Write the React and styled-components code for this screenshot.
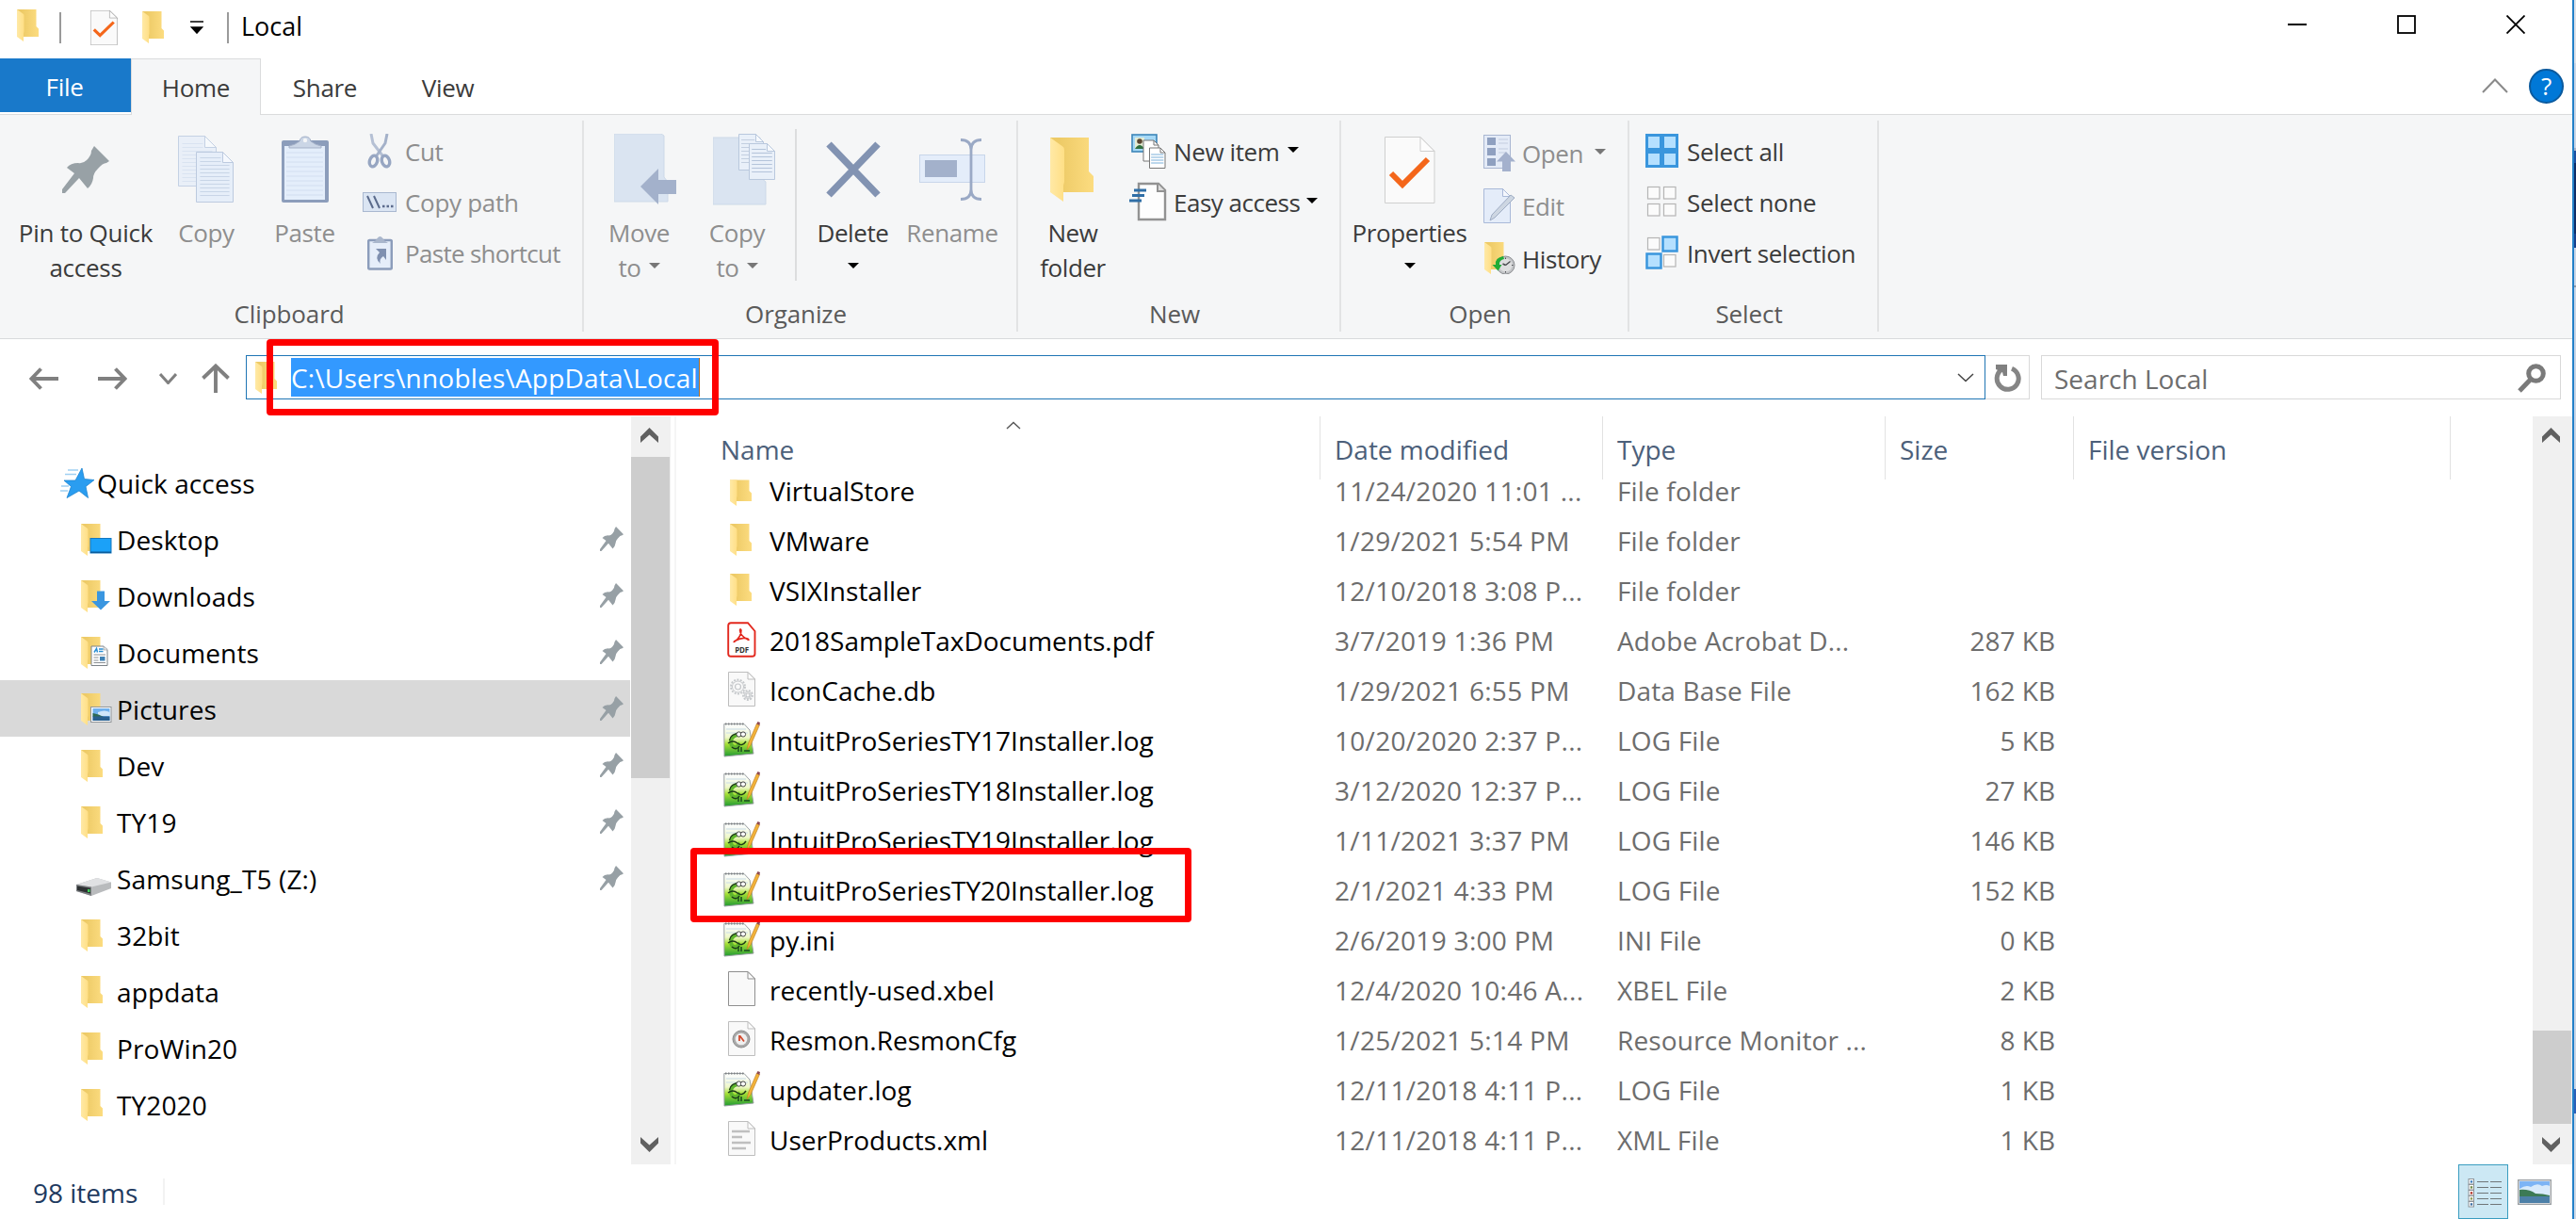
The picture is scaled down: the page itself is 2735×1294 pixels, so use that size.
import React from "react";
import styled, { createGlobalStyle, css } from "styled-components";

const GlobalStyle = createGlobalStyle`
  * { box-sizing: border-box; }
  body { margin: 0; background: #fff; overflow: hidden; }
  body, button, input { font-family: "Open Sans", "Noto Sans", sans-serif; }
`;

/* ---------- window frame ---------- */

const Desktop = styled.div`
  display: flex;
  width: 2735px;
  height: 1294px;
  overflow: hidden;
  background: #fff;
  font-size: 28px;
  color: #000;
  white-space: nowrap;
`;
const Window = styled.div`
  position: relative;
  display: flex;
  flex-direction: column;
  width: 2731px;
  height: 1294px;
  flex: none;
`;
const WindowEdge = styled.div`
  width: 2px;
  flex: none;
  background: #2380c8;
`;
const Backdrop = styled.div`
  width: 2px;
  flex: none;
  background: linear-gradient(
    #dde2ea 0 67px, #cbd7e8 67px 157px, #a9b4c8 157px 160px,
    #1d4fa0 160px 173px, #0d2c66 173px 248px, #173f8b 248px 263px,
    #cbd7e8 263px 303px, #8e99a8 303px 305px, #c9d6e8 305px 1156px,
    #2b5fb8 1156px 1182px, #cfdae8 1182px
  );
`;

/* ---------- title bar ---------- */

const TitleBar = styled.header`
  display: flex;
  height: 62px;
  align-items: flex-start;
`;
const QuickTools = styled.div`
  display: flex;
  align-items: center;
  height: 58px;
  padding-left: 18px;
`;
const TitleRule = styled.i`
  width: 2px;
  height: 33px;
  background: #9a9a9a;
  margin: 0 ${(p) => p.$after}px 0 ${(p) => p.$before}px;
`;
const FolderSlot = styled.span`
  display: flex;
  margin: 0 ${(p) => p.$after || 0}px ${(p) => p.$lift || 0}px 0;
`;
const WindowTitle = styled.h1`
  margin: 0;
  font-size: 27px;
  font-weight: 400;
  line-height: 56px;
  height: 58px;
`;
const WindowButtons = styled.div`
  display: flex;
  margin-left: auto;
  padding: 16px 50px 0 0;
  gap: 96px;
`;

/* ---------- ribbon ---------- */

const TabStrip = styled.nav`
  display: flex;
  height: 60px;
  border-bottom: 1px solid #dadbdc;
`;
const Tab = styled.button`
  width: ${(p) => p.$width}px;
  height: 60px;
  padding: 1px 0 0;
  border: 0;
  background: transparent;
  color: #3b3b3b;
  font-size: 26px;
  letter-spacing: -0.3px;
  ${(p) => p.$kind === "file" && css`
    height: 57px;
    padding: 2px 2px 0 0;
    background: #1979ca;
    color: #fff;
  `}
  ${(p) => p.$kind === "active" && css`
    border: 1px solid #dadbdc;
    border-bottom: 0;
    background: #f5f6f7;
  `}
`;
const TabStripEnd = styled.div`
  display: flex;
  align-items: center;
  gap: 22px;
  height: 60px;
  margin-left: auto;
  padding: 0 9px 2px 0;
`;
const HelpButton = styled.button`
  width: 37px;
  height: 37px;
  padding: 0;
  border: 2px solid #0a5a9e;
  border-radius: 50%;
  background: #0078d7;
  color: #fff;
  font-size: 26px;
  font-weight: 400;
  line-height: 32px;
`;
const Ribbon = styled.section`
  display: flex;
  height: 238px;
  padding: 6px 0 7px;
  border-bottom: 1px solid #d8dadc;
  background: #f5f6f7;
`;
const Group = styled.section`
  display: flex;
  flex-direction: column;
  width: ${(p) => p.$width}px;
  border-right: 2px solid #e2e3e4;
`;
const GroupBody = styled.div`
  display: flex;
  flex: 1;
  padding-left: ${(p) => p.$indent}px;
`;
const GroupLabel = styled.div`
  height: 38px;
  padding-right: ${(p) => p.$trim ?? 9}px;
  line-height: 38px;
  font-size: 26px;
  letter-spacing: -0.1px;
  text-align: center;
  color: #5a5a5a;
`;
const LargeButton = styled.button`
  display: flex;
  flex-direction: column;
  align-items: center;
  width: ${(p) => p.$width}px;
  flex: none;
  padding: 12px 0 0;
  border: 0;
  background: transparent;
  font-size: 26px;
  letter-spacing: ${(p) => p.$tracking ?? -0.4}px;
  line-height: 36.5px;
  color: ${(p) => (p.$disabled ? "#8e8e8e" : "#3b3b3b")};
`;
const LargeIcon = styled.span`
  display: flex;
  align-items: center;
  justify-content: center;
  height: 80px;
  margin-bottom: 9px;
  padding-left: ${(p) => p.$shift || 0}px;
`;
const LargeLine = styled.span`
  display: flex;
  align-items: center;
  gap: 8px;
  height: 36.5px;
`;
const InnerRule = styled.i`
  width: 2px;
  height: 161px;
  margin: 9px 12px 0 10px;
  background: #dcddde;
`;
const SmallColumn = styled.div`
  display: flex;
  flex-direction: column;
  padding-top: ${(p) => p.$top || 5}px;
  margin-left: ${(p) => p.$left || 0}px;
`;
const SmallButton = styled.button`
  display: flex;
  align-items: center;
  height: ${(p) => p.$pitch || 54}px;
  padding: 2px 0 0;
  border: 0;
  background: transparent;
  font-size: 26px;
  letter-spacing: ${(p) => p.$tracking ?? -0.4}px;
  color: ${(p) => (p.$disabled ? "#8e8e8e" : "#3b3b3b")};
`;
const SmallIcon = styled.span`
  display: flex;
  justify-content: center;
  width: 40px;
  margin-right: ${(p) => p.$gap ?? 7}px;
  margin-bottom: 2px;
`;
const Caret = styled.i`
  width: 0;
  height: 0;
  border: 6px solid transparent;
  border-top: 6px solid ${(p) => (p.$disabled ? "#777" : "#000")};
  border-bottom: 0;
  margin-left: ${(p) => p.$left || 0}px;
  margin-bottom: ${(p) => p.$lift || 0}px;
`;

/* ---------- address row ---------- */

const AddressRow = styled.div`
  display: flex;
  align-items: flex-start;
  height: 82px;
  padding: 17px 12px 0 31px;
`;
const NavButtons = styled.div`
  display: flex;
  align-items: center;
  width: 230px;
  height: 49px;
`;
const NavIcon = styled.span`
  display: flex;
  margin-right: ${(p) => p.$after}px;
`;
const AddressBox = styled.div`
  display: flex;
  align-items: center;
  width: 1847px;
  height: 47px;
  padding: 0 11px 0 9px;
  border: 1px solid #1f75b4;
`;
const PathText = styled.span`
  height: 41px;
  margin-left: 14px;
  padding: 0 1px 0 0;
  border-right: 1px solid #b06a20;
  background: #3399ff;
  color: #fff;
  line-height: 43px;
  letter-spacing: 0.2px;
`;
const Spacer = styled.span`
  flex: 1;
`;
const RefreshBox = styled.div`
  display: flex;
  align-items: center;
  justify-content: center;
  width: 47px;
  height: 47px;
  padding-left: 2px;
  border: 1px solid #d9d9d9;
  border-left: 0;
`;
const SearchBox = styled.div`
  display: flex;
  align-items: center;
  justify-content: space-between;
  width: 552px;
  height: 47px;
  margin-left: 12px;
  padding: 2px 15px 0 13px;
  border: 1px solid #d9d9d9;
  color: #6d6d6d;
`;

/* ---------- panes ---------- */

const Panes = styled.main`
  display: flex;
  height: 794px;
`;
const NavPane = styled.aside`
  width: 669px;
  padding-top: 40px;
`;
const NavItem = styled.div`
  display: flex;
  align-items: center;
  height: 60px;
  padding: 2px 7px 0 ${(p) => (p.$root ? 62 : 79)}px;
  background: ${(p) => (p.$selected ? "#d9d9d9" : "transparent")};
  letter-spacing: 0.12px;
`;
const NavItemIcon = styled.span`
  display: flex;
  width: ${(p) => (p.$root ? 41 : 45)}px;
  padding: ${(p) => p.$drop || 0}px 0 0 ${(p) => p.$inset}px;
`;
const PinSlot = styled.span`
  display: flex;
  margin-left: auto;
  padding-bottom: 3px;
`;
const ScrollTrack = styled.div`
  display: flex;
  flex-direction: column;
  align-items: center;
  width: ${(p) => p.$width}px;
  height: 794px;
  margin-left: ${(p) => p.$left || 0}px;
  background: #f0f0f0;
`;
const ScrollArrow = styled.span`
  display: flex;
  align-items: center;
  justify-content: center;
  height: 43px;
  width: 100%;
  padding: 0 3px ${(p) => p.$lift || 0}px 0;
`;
const ScrollRail = styled.div`
  flex: 1;
  width: 100%;
  padding: ${(p) => p.$offset}px 1px 0 0;
`;
const ScrollThumb = styled.div`
  height: ${(p) => p.$size}px;
  background: #cdcdcd;
`;
const PaneRule = styled.i`
  width: 2px;
  height: 794px;
  margin-left: 4px;
  background: #f5f5f5;
`;
const FilePane = styled.section`
  width: 1971px;
`;
const columns = "684px 300px 300px 200px 400px";
const HeaderRow = styled.div`
  display: grid;
  grid-template-columns: ${columns};
  height: 67px;
`;
const HeaderCell = styled.div`
  position: relative;
  padding: 3px 0 0 ${(p) => (p.$first ? 47 : 15)}px;
  border-right: 1px solid #e2e2e2;
  color: #4c607a;
  line-height: 64px;
`;
const SortMark = styled.span`
  position: absolute;
  left: 350px;
  top: 5px;
  display: flex;
`;
const FileIconSlot = styled.span`
  display: flex;
  align-items: center;
  justify-content: center;
  width: 46px;
  height: 42px;
  margin: 0 7px 4px 0;
`;
/* The first row is scrolled half way under the column headers. */
const FileList = styled.div`
  height: 727px;
  margin-top: -15px;
`;
const FileRow = styled.div`
  display: grid;
  grid-template-columns: ${columns};
  height: 53px;
  padding-top: 1px;
  line-height: 53px;
  &:first-child ${FileIconSlot} { clip-path: inset(11px 0 0 0); }
`;
const NameCell = styled.div`
  display: flex;
  align-items: center;
  height: 53px;
  padding-left: 46px;
`;
const InfoCell = styled.div`
  padding-left: 15px;
  color: #6d6d6d;
  letter-spacing: ${(p) => p.$tracking || 0}px;
`;
const SizeCell = styled.div`
  padding-right: 20px;
  text-align: right;
  color: #6d6d6d;
`;

/* ---------- status bar ---------- */

const StatusBar = styled.footer`
  display: flex;
  height: 58px;
  padding-left: 35px;
  color: #1e3a5f;
`;
const StatusText = styled.span`
  height: 28px;
  margin-top: 15px;
  padding-right: 27px;
  border-right: 2px solid #f2f2f2;
  line-height: 31px;
`;
const ViewButtons = styled.div`
  display: flex;
  align-items: center;
  margin-left: auto;
  padding-right: 22px;
`;
const DetailsButton = styled.span`
  display: flex;
  align-items: center;
  justify-content: center;
  width: 53px;
  height: 58px;
  margin-right: 10px;
  padding: 2px 0 0 3px;
  border: 1px solid #3a9dc0;
  background: #cce8f4;
`;
const Highlight = styled.div`
  position: absolute;
  left: ${(p) => p.$x}px;
  top: ${(p) => p.$y}px;
  width: ${(p) => p.$w}px;
  height: ${(p) => p.$h}px;
  border: 7.5px solid #fe0000;
  border-radius: 4px;
`;

/* ---------- icons ---------- */

const Folder = ({ w = 24, h = 34, overlay }) => (
  <svg width={overlay ? 33 : w} height={h} viewBox={overlay ? "0 0 66 68" : "0 0 48 68"} preserveAspectRatio="none">
    <defs>
      <linearGradient id="fback" x1="0" x2="1"><stop offset="0.2" stopColor="#edca66" /><stop offset="1" stopColor="#fcdc80" /></linearGradient>
      <linearGradient id="ffront" x1="0" x2="1"><stop offset="0" stopColor="#ffe9a6" /><stop offset="1" stopColor="#ffdf86" /></linearGradient>
    </defs>
    <path d="M0 0H41V36L46 41V58H12L0 40Z" fill="url(#fback)" />
    <path d="M0 0L14 10Q15 11 15 14V47L14 51V68L0 58Z" fill="url(#ffront)" />
    {overlay}
  </svg>
);
const desktopOverlay = <g><rect x="20" y="31" width="44" height="31" fill="#1ba1f8" stroke="#1478c0" strokeWidth="2" /><path d="M20 59H64V62H20Z" fill="#0b5c9c" /></g>;
const downloadOverlay = <path d="M34 23H50V44H62L42 63L22 44H34Z" fill="#3a96e0" />;
const documentOverlay = (
  <g><path d="M22 20H48L56 27V61H22Z" fill="#fff" stroke="#7c8287" strokeWidth="2" /><path d="M48 20V28H56" fill="#e6e6e6" stroke="#7c8287" />
    <path d="M28 33L33 25L35 33M38 26H47M38 31H47" stroke="#2a8fd4" strokeWidth="3" fill="none" /><path d="M27 38H52M27 44H37M27 50H37M27 55H52" stroke="#8a8f94" strokeWidth="2" /><rect x="40" y="42" width="11" height="9" fill="#3f82b5" /></g>
);
const pictureOverlay = (
  <g><rect x="21" y="29" width="43" height="32" fill="#fff" stroke="#8f9498" strokeWidth="2" /><rect x="25" y="32" width="36" height="26" fill="#6fb1ee" />
    <path d="M36 40Q50 34 61 40V48H36Z" fill="#cfe6fa" /><path d="M25 42Q38 44 48 50H25Z" fill="#2e6a54" /><rect x="25" y="49" width="36" height="9" fill="#285f8f" /></g>
);
const historyOverlay = (
  <g><circle cx="45" cy="49" r="19" fill="#c3c5c8" stroke="#8b8d90" strokeWidth="2" /><circle cx="45" cy="49" r="14" fill="#dedfe0" />
    <path d="M45 49L55 41M45 49L39 46" stroke="#4a4c50" strokeWidth="3" /><path d="M45 33V36M45 62V65M58 49H61" stroke="#4a4c50" strokeWidth="2" />
    <path d="M40 30Q22 33 24 48H17L29 61L37 48H32Q31 38 42 36Z" fill="#21ac36" /></g>
);

const Pin = ({ w, h, color = "#98a1a6" }) => (
  <svg width={w} height={h} viewBox="0 0 50 50" preserveAspectRatio="none" fill={color}>
    <path d="M34 0L50 16L47 18Q43 18 38 24Q33 29 33 34Q32 41 27 45L18 34L3 50H0V46L13 29L5 23Q9 18 17 18Q22 19 26 15Q31 10 31 5Z" />
  </svg>
);
const Sheet = ({ x = 0, y = 0, w, h, fold = 14, fill = "#eaf1fa", stroke = "#b9c8dd", lines, lineColor = "#c3cfe0", step = 5, top = 12 }) => {
  const rows = [];
  if (lines) for (let i = y + top; i < y + h - 4; i += step) rows.push(i);
  return (
    <g>
      <path d={`M${x} ${y}h${w - fold}l${fold} ${fold}v${h - fold}h${-w}z`} fill={fill} stroke={stroke} strokeWidth="1" />
      <path d={`M${x + w - fold} ${y}v${fold}h${fold}z`} fill="#fff" fillOpacity="0.6" stroke={stroke} strokeWidth="1" />
      {rows.map((r) => <path key={r} d={`M${x + w * 0.1} ${r}h${r < y + fold + 2 ? w - fold - w * 0.15 : w * 0.8}`} stroke={lineColor} strokeWidth="1" />)}
    </g>
  );
};
const CopyIcon = () => (
  <svg width="60" height="72" viewBox="0 0 60 72">
    <Sheet x={0.5} y={0.5} w={40} h={53} fold={12} lines step={4} top={8} fill="#e9eff8" stroke="#c4d1e4" lineColor="#d9e3f1" />
    <Sheet x={19.5} y={17.5} w={39} h={53} fold={11} lines step={4} top={6} fill="#e6eef9" stroke="#bccadf" lineColor="#c8d5e7" />
  </svg>
);
const PasteIcon = () => (
  <svg width="50" height="72" viewBox="0 0 50 72">
    <rect x="0" y="5" width="50" height="66" rx="2" fill="#8c9dbb" /><rect x="3" y="11" width="43" height="57" fill="#e4eefb" />
    {[18, 23, 28, 33, 38, 43, 48, 53, 58, 63].map((y) => <path key={y} d={`M5 ${y}H44`} stroke="#d2def0" />)}
    <path d="M8 11Q14 10 19 6Q20 1 25 1Q30 1 31 6Q36 10 42 11V13H8Z" fill="#cbd6e6" stroke="#a4b1c8" /><circle cx="25" cy="5" r="2.2" fill="#f5f6f7" />
  </svg>
);
const CutIcon = () => (
  <svg width="26" height="37" viewBox="0 0 26 37" fill="none">
    <path d="M4 0L6 10L16 23" stroke="#b5c0d4" strokeWidth="3" /><path d="M21 0L19 10L10 23" stroke="#a4b1c9" strokeWidth="3" />
    <ellipse cx="6.5" cy="29" rx="4" ry="6" transform="rotate(18 6.5 29)" stroke="#97a6c2" strokeWidth="3.4" /><ellipse cx="19.5" cy="29" rx="4" ry="6" transform="rotate(-18 19.5 29)" stroke="#97a6c2" strokeWidth="3.4" />
  </svg>
);
const CopyPathIcon = () => (
  <svg width="36" height="21" viewBox="0 0 36 21">
    <rect x="0.5" y="0.5" width="35" height="20" fill="#dbe5f3" stroke="#a9b8d0" />
    <path d="M5 4L11 17M12 4L18 17" stroke="#5b6b8c" strokeWidth="2" /><path d="M21 15h2.5M25.5 15h2.5M30 15h2.5" stroke="#5b6b8c" strokeWidth="2.5" />
  </svg>
);
const PasteShortcutIcon = () => (
  <svg width="27" height="37" viewBox="0 0 27 37">
    <rect x="1.2" y="5" width="24.6" height="30.500" rx="1" fill="#e6eefa" stroke="#8c9dbb" strokeWidth="2.5" /><path d="M5 8Q9 6 10.500 3Q13.500 -1 16.500 3Q18 6 22 8Z" fill="#a9b6cc" />
    <path d="M9 14H20V26L17 22Q12 25 14 30Q7 24 13 18Z" fill="#7f90b0" />
  </svg>
);
const MoveIcon = () => (
  <svg width="67" height="76" viewBox="0 0 67 76">
    <path d="M0 0H50L53 2V46L57 51V72H0Z" fill="#dae4f1" stroke="#cdd9e8" /><path d="M28 56L47 37V49H66V64H47V75Z" fill="#a3b1cb" />
  </svg>
);
const CopyToIcon = () => (
  <svg width="67" height="76" viewBox="0 0 67 76">
    <path d="M0 4H50V46L56 51V75H0Z" fill="#dae4f1" stroke="#cdd9e8" />
    <Sheet x={27.5} y={0.5} w={26} h={38} fold={8} lines step={4} top={6} fill="#e9f0f9" />
    <Sheet x={38.5} y={10.5} w={27} h={38} fold={8} lines step={4} top={6} fill="#e9f0f9" lineColor="#b4c4da" />
  </svg>
);
const DeleteIcon = () => (
  <svg width="58" height="60" viewBox="0 0 58 60"><path d="M3 3L55 57M55 3L3 57" stroke="#8293b2" strokeWidth="7.500" /></svg>
);
const RenameIcon = () => (
  <svg width="70" height="66" viewBox="0 0 70 66">
    <rect x="0.500" y="17.500" width="69" height="29" fill="#e4edfa" stroke="#c8d6ea" /><rect x="6" y="23" width="34" height="18" fill="#a3b1cb" />
    <path d="M44 1.500Q55 1.500 55 12V54Q55 64.500 44 64.500M66 1.500Q55 1.500 55 12M55 54Q55 64.500 66 64.500" fill="none" stroke="#9aa9c5" strokeWidth="2.800" />
  </svg>
);
const NewItemIcon = () => (
  <svg width="37" height="37" viewBox="0 0 37 37">
    <rect x="1" y="1" width="26" height="18" fill="#a5d8f6" stroke="#3c85b8" strokeWidth="1.600" /><rect x="4" y="4" width="10" height="12" fill="#e5ecd4" /><circle cx="9" cy="8" r="2.800" fill="#5a4632" /><path d="M4 16Q9 8 14 16Z" fill="#2f6f3f" />
    <Sheet x={13} y={7} w={16} h={22} fold={5} fill="#fff" stroke="#777" /><Sheet x={19.500} y={15} w={16.500} h={21.500} fold={5} fill="#fff" stroke="#777" lines step={3} top={7} lineColor="#7ab0da" />
  </svg>
);
const EasyAccessIcon = () => (
  <svg width="40" height="42" viewBox="0 0 40 42">
    <path d="M10 2H31L38 9V40H10Z" fill="#fdfdfd" stroke="#929292" strokeWidth="2.400" /><path d="M30 2V10H38" fill="#ddd" stroke="#929292" strokeWidth="2" />
    <path d="M5 9H18M3 14.500H16M0 20H13" stroke="#2f6ea6" strokeWidth="2.800" />
  </svg>
);
const PropertiesIcon = ({ w = 54, h = 71 }) => (
  <svg width={w} height={h} viewBox="0 0 54 71" preserveAspectRatio="none">
    <Sheet x={0.500} y={0.500} w={52.500} h={70} fold={15} fill="#fafafa" stroke={w < 40 ? "#8d8d8d" : "#cfcfcf"} />
    <path d="M7 39L19 51L46 24" fill="none" stroke="#f4661a" strokeWidth="6" />
  </svg>
);
const OpenIcon = () => (
  <svg width="35" height="39" viewBox="0 0 35 39">
    <rect x="0.500" y="0.500" width="28" height="35" fill="#e4ebf7" stroke="#a9b7d2" /><path d="M4 3h9v8h-9zM4 14h9v8h-9zM4 25h9v8h-9z" fill="#8fa0c0" /><path d="M16 5h10M16 9h10M16 15h10M16 19h8" stroke="#c3cde0" />
    <path d="M24 18L34 28.500H29V39H20V28.500H14Z" fill="#a4b1cd" />
  </svg>
);
const EditIcon = () => (
  <svg width="34" height="37" viewBox="0 0 34 37">
    <Sheet x={0.500} y={0.500} w={28} h={36} fold={8} fill="#e4ecf9" stroke="#a9b9d8" /><path d="M7 34L9 28L29 7L33 10L12 31Z" fill="#cdd6e2" stroke="#9fadc4" />
  </svg>
);
const SelectIcon = ({ on }) => {
  const cells = [[1.500, 1.500], [18.500, 1.500], [1.500, 19.500], [18.500, 19.500]];
  return (
    <svg width="35" height="36" viewBox="0 0 35 36">
      {cells.map(([x, y], i) => on[i]
        ? <rect key={i} x={x} y={y} width="15" height="15" fill="#b5e0ff" stroke="#3a96dd" strokeWidth={on.every(Boolean) ? 3 : 2.500} />
        : <rect key={i} x={x + 1} y={y + 1} width="12.500" height="12.500" fill="#fbfbfb" stroke="#b5b5b5" strokeWidth="1.200" />)}
    </svg>
  );
};
const Chevron = ({ w, h, color, thick = 2, up }) => (
  <svg width={w} height={h} viewBox={`0 0 ${w} ${h}`} fill="none">
    <path d={up ? `M1 ${h - 1}L${w / 2} 1.500L${w - 1} ${h - 1}` : `M1 1L${w / 2} ${h - 1.500}L${w - 1} 1`} stroke={color} strokeWidth={thick} />
  </svg>
);
const ScrollGlyph = ({ down }) => (
  <svg width="19" height="16" viewBox="0 0 19 16">
    <path d={down ? "M0 0L9.500 8.500L19 0V6.500L9.500 16L0 6.500Z" : "M0 16L9.500 7.500L19 16V9.500L9.500 0L0 9.500Z"} fill="#606060" />
  </svg>
);
const ArrowIcon = ({ turn }) => (
  <svg width="32" height="24" viewBox="0 0 32 24" fill="none" transform={turn ? "rotate(180)" : undefined}>
    <path d="M12.500 1.500L2.500 12L12.500 22.500M2.500 12H31" stroke="#808080" strokeWidth="3.900" />
  </svg>
);
const UpIcon = () => (
  <svg width="30" height="31" viewBox="0 0 30 31" fill="none"><path d="M1.500 15.500L15 2.500L28.500 15.500M15 2.500V31" stroke="#808080" strokeWidth="3.900" /></svg>
);
const RefreshIcon = () => (
  <svg width="30" height="30" viewBox="0 0 30 30">
    <path d="M19 4.200A11.500 11.500 0 1 1 8 5.500" fill="none" stroke="#858585" strokeWidth="5" transform="translate(0 1)" /><path d="M2 1H14V13H10L9 9L2 6Z" fill="#808080" />
  </svg>
);
const SearchIcon = () => (
  <svg width="30" height="31" viewBox="0 0 30 31" fill="none"><circle cx="19.500" cy="10.500" r="7.800" stroke="#7a7a7a" strokeWidth="5" /><path d="M14 16.500L2 29" stroke="#7a7a7a" strokeWidth="5" /></svg>
);
const StarIcon = () => (
  <svg width="36" height="32" viewBox="0 0 36 32">
    <path d="M23 0L25.500 11.500L36 12.500L27 19.500L29.500 31.500L20 24L7 31.500L11.500 19.500L4 13H16Z" fill="#2a9df0" stroke="#1c84d0" strokeWidth="0.800" />
    <path d="M8 2H19M5 6.500H17M1 19H9M0 24H8" stroke="#9fd0f2" strokeWidth="1.400" />
  </svg>
);
const DriveIcon = () => (
  <svg width="37" height="19" viewBox="0 0 37 19">
    <path d="M0 7L22 0L37 4.500V11L16 19L0 14Z" fill="#b9bbbd" /><path d="M0 7L22 0L37 4.500L16 9.500Z" fill="#e0e1e3" /><path d="M0 7L16 9.500V19L0 14Z" fill="#7c7f82" /><path d="M1 8.500L15 10.800V16.500L1 13Z" fill="#2e3133" /><rect x="12" y="12" width="2.500" height="3" fill="#3fd05a" />
  </svg>
);
const PdfIcon = () => (
  <svg width="31" height="38" viewBox="0 0 31 38">
    <path d="M4 1.200H22L29.500 10V34Q29.500 36.800 26.500 36.800H4Q1.200 36.800 1.200 34V4Q1.200 1.200 4 1.200Z" fill="#fff" stroke="#e2281e" strokeWidth="1.900" />
    <path d="M8 21Q15 16 15 9Q14 6.500 13.500 9Q14 15 22 19Q24 20 22 18Q16 16 9 20Q6 22 8 21" fill="none" stroke="#e2281e" strokeWidth="1.600" />
    <text x="15.500" y="32.800" textAnchor="middle" fontFamily="Open Sans, sans-serif" fontWeight="700" fontSize="8" letterSpacing="-0.200" fill="#333">PDF</text>
  </svg>
);
const Gear = ({ cx, cy, r }) => (
  <g fill="none" stroke="#c4c7ca"><circle cx={cx} cy={cy} r={r} strokeWidth="1.800" strokeDasharray="2 1.400" /><circle cx={cx} cy={cy} r={r - 1.500} strokeWidth="1" /><circle cx={cx} cy={cy} r={r * 0.4} strokeWidth="1.200" /></g>
);
const PageIcon = ({ kind }) => (
  <svg width="29" height="37" viewBox="0 0 29 37">
    <Sheet x={0.500} y={0.500} w={28} h={36} fold={7.500} fill="#f9f9f9" stroke={kind === "blank" ? "#8f8f8f" : "#bdbdbd"} />
    {kind === "db" && <g><Gear cx={10.500} cy={16} r={7.500} /><Gear cx={21} cy={25} r={5} /></g>}
    {kind === "gauge" && <g><circle cx="14" cy="19" r="9" fill="#a9a9a9" stroke="#8b8b8b" /><circle cx="14" cy="19" r="6.300" fill="#efefef" /><path d="M12 15V21M12.500 15.500L17 21.500" stroke="#d24a2e" strokeWidth="1.800" /></g>}
    {kind === "xml" && <path d="M4 11H23M4 17H15M4 23H24M4 29H19" stroke="#bfbfbf" strokeWidth="2.400" />}
  </svg>
);
const NotepadIcon = () => (
  <svg width="39" height="38" viewBox="0 0 39 38">
    <defs><linearGradient id="npp" x1="0" y1="0" x2="0" y2="1"><stop offset="0.100" stopColor="#fafcf8" /><stop offset="0.420" stopColor="#eef7c8" /><stop offset="0.620" stopColor="#a5e035" /><stop offset="1" stopColor="#1f9a33" /></linearGradient></defs>
    <path d="M0.800 2.500H22L28 9L32 34L1 37Z" fill="url(#npp)" stroke="#9a9fa2" /><path d="M2 2.500H22" stroke="#7c8083" strokeWidth="2.200" strokeDasharray="1.500 1.500" /><path d="M3 8H24M3 12H26" stroke="#c9dbe8" />
    <path d="M20 14Q9 13 8 21Q8 28 14 27Q18 26 15 23" fill="none" stroke="#5fb52c" strokeWidth="4" />
    <path d="M21 13Q8 11 6.500 20M5 23Q10 19 15 23T24 21M9 27Q14 31 17 26" fill="none" stroke="#1d3a1a" strokeWidth="1.400" />
    <circle cx="16.500" cy="13.500" r="2.600" fill="#fff" stroke="#333" strokeWidth="0.900" /><circle cx="21" cy="13.500" r="2.600" fill="#fff" stroke="#333" strokeWidth="0.900" /><path d="M16 27V32M19 27V32M22 31H28" stroke="#174a1d" strokeWidth="1.500" strokeDasharray="7 1" />
    <path d="M25 30L26.500 23L35.500 2L38.500 3.500L29 25Z" fill="#f2b23a" stroke="#b97a22" strokeWidth="0.600" /><path d="M35.300 2.500L36.500 0L39 1L38.300 4Z" fill="#8d4a55" />
  </svg>
);
const DetailsIcon = () => (
  <svg width="37" height="31" viewBox="0 0 37 31">
    {[0, 1, 2, 3, 4].map((i) => (
      <g key={i}><rect x="1" y={i * 6 + 0.500} width="5.500" height="5.500" fill="#fff" stroke="#8e9499" /><rect x="2.800" y={i * 6 + 2.200} width="2.400" height="2.400" fill={["#3d7ebc", "#6f8c4c", "#b2352a", "#8b9a52", "#3d6fa5"][i]} />
        <path d={`M10 ${i * 6 + 3.500}H22M24 ${i * 6 + 3.500}H36`} stroke="#6f7678" strokeWidth="1.200" /></g>
    ))}
  </svg>
);
const ThumbnailIcon = () => (
  <svg width="36" height="27" viewBox="0 0 36 27">
    <rect x="0.700" y="0.700" width="34.600" height="25.600" fill="#fff" stroke="#9a9fa3" strokeWidth="1.400" /><rect x="2" y="2" width="32" height="23" fill="#7db4f5" />
    <path d="M2 10Q9 5 14 8Q21 3 26 7Q31 5 34 7V18H2Z" fill="#d8eafb" /><path d="M2 11Q12 10 19 15Q27 15 34 17V19H2Z" fill="#3c7a55" /><rect x="2" y="18" width="32" height="7" fill="#4d80a8" />
  </svg>
);

/* ---------- data ---------- */

const navItems = [
  { name: "Quick access", icon: <StarIcon />, root: true, inset: 2 },
  { name: "Desktop", overlay: desktopOverlay, pinned: true },
  { name: "Downloads", overlay: downloadOverlay, pinned: true },
  { name: "Documents", overlay: documentOverlay, pinned: true },
  { name: "Pictures", overlay: pictureOverlay, pinned: true, selected: true },
  { name: "Dev", pinned: true },
  { name: "TY19", pinned: true },
  { name: "Samsung_T5 (Z:)", icon: <DriveIcon />, pinned: true, inset: 2, drop: 17 },
  { name: "32bit" },
  { name: "appdata" },
  { name: "ProWin20" },
  { name: "TY2020" },
];
const files = [
  ["VirtualStore", "11/24/2020 11:01 ...", "File folder", "", "folder"],
  ["VMware", "1/29/2021 5:54 PM", "File folder", "", "folder"],
  ["VSIXInstaller", "12/10/2018 3:08 P...", "File folder", "", "folder"],
  ["2018SampleTaxDocuments.pdf", "3/7/2019 1:36 PM", "Adobe Acrobat D...", "287 KB", "pdf"],
  ["IconCache.db", "1/29/2021 6:55 PM", "Data Base File", "162 KB", "db"],
  ["IntuitProSeriesTY17Installer.log", "10/20/2020 2:37 P...", "LOG File", "5 KB", "npp"],
  ["IntuitProSeriesTY18Installer.log", "3/12/2020 12:37 P...", "LOG File", "27 KB", "npp"],
  ["IntuitProSeriesTY19Installer.log", "1/11/2021 3:37 PM", "LOG File", "146 KB", "npp"],
  ["IntuitProSeriesTY20Installer.log", "2/1/2021 4:33 PM", "LOG File", "152 KB", "npp"],
  ["py.ini", "2/6/2019 3:00 PM", "INI File", "0 KB", "npp"],
  ["recently-used.xbel", "12/4/2020 10:46 A...", "XBEL File", "2 KB", "blank"],
  ["Resmon.ResmonCfg", "1/25/2021 5:14 PM", "Resource Monitor ...", "8 KB", "gauge"],
  ["updater.log", "12/11/2018 4:11 P...", "LOG File", "1 KB", "npp"],
  ["UserProducts.xml", "12/11/2018 4:11 P...", "XML File", "1 KB", "xml"],
];
const fileIcon = (kind) => {
  if (kind === "folder") return <Folder />;
  if (kind === "pdf") return <PdfIcon />;
  if (kind === "npp") return <NotepadIcon />;
  return <PageIcon kind={kind} />;
};

/* ---------- pieces ---------- */

const Large = ({ width, icon, shift, disabled, line1, line2, caret, tracking }) => (
  <LargeButton $width={width} $disabled={disabled} $tracking={tracking}>
    <LargeIcon $shift={shift}>{icon}</LargeIcon>
    <LargeLine>{line1}</LargeLine>
    {(line2 || caret) && <LargeLine>{line2}{caret && <Caret $disabled={disabled} $lift={3} />}</LargeLine>}
  </LargeButton>
);
const Small = ({ icon, gap, pitch, disabled, caret, tracking, children }) => (
  <SmallButton $disabled={disabled} $pitch={pitch} $tracking={tracking}>
    <SmallIcon $gap={gap}>{icon}</SmallIcon>
    {children}
    {caret && <Caret $disabled={disabled} $left={caret} $lift={5} />}
  </SmallButton>
);

export default function App() {
  return (
    <Desktop>
      <GlobalStyle />
      <Window>
        <TitleBar>
          <QuickTools>
            <FolderSlot $lift={5}><Folder /></FolderSlot>
            <TitleRule $before={21} $after={31} />
            <FolderSlot $after={26}><PropertiesIcon w={29} h={37} /></FolderSlot>
            <FolderSlot $after={27}><Folder /></FolderSlot>
            <svg width="14" height="14" viewBox="0 0 14 14"><path d="M0 1H14M1.500 7H12.500L7 13Z" stroke="#000" strokeWidth="1.500" /></svg>
            <TitleRule $before={25} $after={13} />
          </QuickTools>
          <WindowTitle>Local</WindowTitle>
          <WindowButtons>
            <svg width="20" height="20"><path d="M0 10H20" stroke="#000" strokeWidth="2" /></svg>
            <svg width="20" height="20"><rect x="1" y="1" width="18" height="18" fill="none" stroke="#000" strokeWidth="1.800" /></svg>
            <svg width="20" height="20"><path d="M0.500 0.500L19.500 19.500M19.500 0.500L0.500 19.500" stroke="#000" strokeWidth="1.800" /></svg>
          </WindowButtons>
        </TitleBar>

        <TabStrip>
          <Tab $width={139} $kind="file">File</Tab>
          <Tab $width={138} $kind="active">Home</Tab>
          <Tab $width={136}>Share</Tab>
          <Tab $width={125}>View</Tab>
          <TabStripEnd>
            <Chevron w={28} h={16} color="#8a8a8a" up />
            <HelpButton>?</HelpButton>
          </TabStripEnd>
        </TabStrip>

        <Ribbon>
          <Group $width={620}>
            <GroupBody $indent={8}>
              <Large width={166} tracking={-0.25} icon={<Pin w={50} h={50} />} line1="Pin to Quick" line2="access" />
              <Large width={90} disabled icon={<CopyIcon />} line1="Copy" />
              <Large width={119} disabled icon={<PasteIcon />} line1="Paste" />
              <SmallColumn>
                <Small disabled icon={<CutIcon />}>Cut</Small>
                <Small disabled tracking={-0.3} icon={<CopyPathIcon />}>Copy path</Small>
                <Small disabled tracking={-0.7} icon={<PasteShortcutIcon />}>Paste shortcut</Small>
              </SmallColumn>
            </GroupBody>
            <GroupLabel $trim={4}>Clipboard</GroupLabel>
          </Group>
          <Group $width={461}>
            <GroupBody $indent={6}>
              <Large width={105} disabled shift={14} icon={<MoveIcon />} line1="Move" line2="to" caret />
              <Large width={103} disabled shift={16} icon={<CopyToIcon />} line1="Copy" line2="to" caret />
              <InnerRule />
              <Large width={95} icon={<DeleteIcon />} line1="Delete" caret />
              <Large width={116} disabled icon={<RenameIcon />} line1="Rename" />
            </GroupBody>
            <GroupLabel>Organize</GroupLabel>
          </Group>
          <Group $width={343}>
            <GroupBody $indent={9}>
              <Large width={98} icon={<Folder w={48} h={68} />} line1="New" line2="folder" />
              <SmallColumn $left={11}>
                <Small icon={<NewItemIcon />} caret={9}>New item</Small>
                <Small tracking={-0.5} icon={<EasyAccessIcon />} caret={7}>Easy access</Small>
              </SmallColumn>
            </GroupBody>
            <GroupLabel>New</GroupLabel>
          </Group>
          <Group $width={306}>
            <GroupBody $indent={3}>
              <Large width={139} icon={<PropertiesIcon />} line1="Properties" caret />
              <SmallColumn $left={6} $top={6}>
                <Small disabled pitch={56} gap={4} icon={<OpenIcon />} caret={12}>Open</Small>
                <Small disabled pitch={56} gap={4} icon={<EditIcon />}>Edit</Small>
                <Small pitch={56} gap={4} icon={<Folder overlay={historyOverlay} />}>History</Small>
              </SmallColumn>
            </GroupBody>
            <GroupLabel>Open</GroupLabel>
          </Group>
          <Group $width={265}>
            <GroupBody $indent={14}>
              <SmallColumn>
                <Small icon={<SelectIcon on={[1, 1, 1, 1]} />} tracking={-0.3}>Select all</Small>
                <Small icon={<SelectIcon on={[0, 0, 0, 0]} />} tracking={-0.3}>Select none</Small>
                <Small icon={<SelectIcon on={[0, 1, 1, 0]} />}>Invert selection</Small>
              </SmallColumn>
            </GroupBody>
            <GroupLabel>Select</GroupLabel>
          </Group>
        </Ribbon>

        <AddressRow>
          <NavButtons>
            <NavIcon $after={40}><ArrowIcon /></NavIcon>
            <NavIcon $after={34}><ArrowIcon turn /></NavIcon>
            <NavIcon $after={26}><Chevron w={19} h={12} color="#808080" thick={3} /></NavIcon>
            <UpIcon />
          </NavButtons>
          <AddressBox>
            <Folder />
            <PathText>C:\Users\nnobles\AppData\Local</PathText>
            <Spacer />
            <Chevron w={18} h={10} color="#444" thick={1.5} />
          </AddressBox>
          <RefreshBox><RefreshIcon /></RefreshBox>
          <SearchBox>Search Local<SearchIcon /></SearchBox>
        </AddressRow>

        <Panes>
          <NavPane>
            {navItems.map((item) => (
              <NavItem key={item.name} $root={item.root} $selected={item.selected}>
                <NavItemIcon $root={item.root} $inset={item.inset ?? 7} $drop={item.drop}>
                  {item.icon || <Folder overlay={item.overlay} />}
                </NavItemIcon>
                {item.name}
                {item.pinned && <PinSlot><Pin w={25} h={26} color="#97a0a5" /></PinSlot>}
              </NavItem>
            ))}
          </NavPane>
          <ScrollTrack $width={42} $left={1}>
            <ScrollArrow $lift={3}><ScrollGlyph /></ScrollArrow>
            <ScrollRail $offset={0}><ScrollThumb $size={341} /></ScrollRail>
            <ScrollArrow><ScrollGlyph down /></ScrollArrow>
          </ScrollTrack>
          <PaneRule />
          <FilePane>
            <HeaderRow>
              <HeaderCell $first>Name<SortMark><Chevron w={16} h={9} color="#555" thick={1.4} up /></SortMark></HeaderCell>
              <HeaderCell>Date modified</HeaderCell>
              <HeaderCell>Type</HeaderCell>
              <HeaderCell>Size</HeaderCell>
              <HeaderCell>File version</HeaderCell>
            </HeaderRow>
            <FileList>
              {files.map(([name, date, type, size, kind]) => (
                <FileRow key={name}>
                  <NameCell><FileIconSlot>{fileIcon(kind)}</FileIconSlot>{name}</NameCell>
                  <InfoCell $tracking={0.3}>{date}</InfoCell>
                  <InfoCell $tracking={0.15}>{type}</InfoCell>
                  <SizeCell>{size}</SizeCell>
                </FileRow>
              ))}
            </FileList>
          </FilePane>
          <ScrollTrack $width={42}>
            <ScrollArrow $lift={3}><ScrollGlyph /></ScrollArrow>
            <ScrollRail $offset={609}><ScrollThumb $size={99} /></ScrollRail>
            <ScrollArrow><ScrollGlyph down /></ScrollArrow>
          </ScrollTrack>
        </Panes>

        <StatusBar>
          <StatusText>98 items</StatusText>
          <ViewButtons>
            <DetailsButton><DetailsIcon /></DetailsButton>
            <ThumbnailIcon />
          </ViewButtons>
        </StatusBar>

        <Highlight $x={283} $y={359.500} $w={480} $h={81} />
        <Highlight $x={732.500} $y={900} $w={532} $h={79} />
      </Window>
      <WindowEdge />
      <Backdrop />
    </Desktop>
  );
}
